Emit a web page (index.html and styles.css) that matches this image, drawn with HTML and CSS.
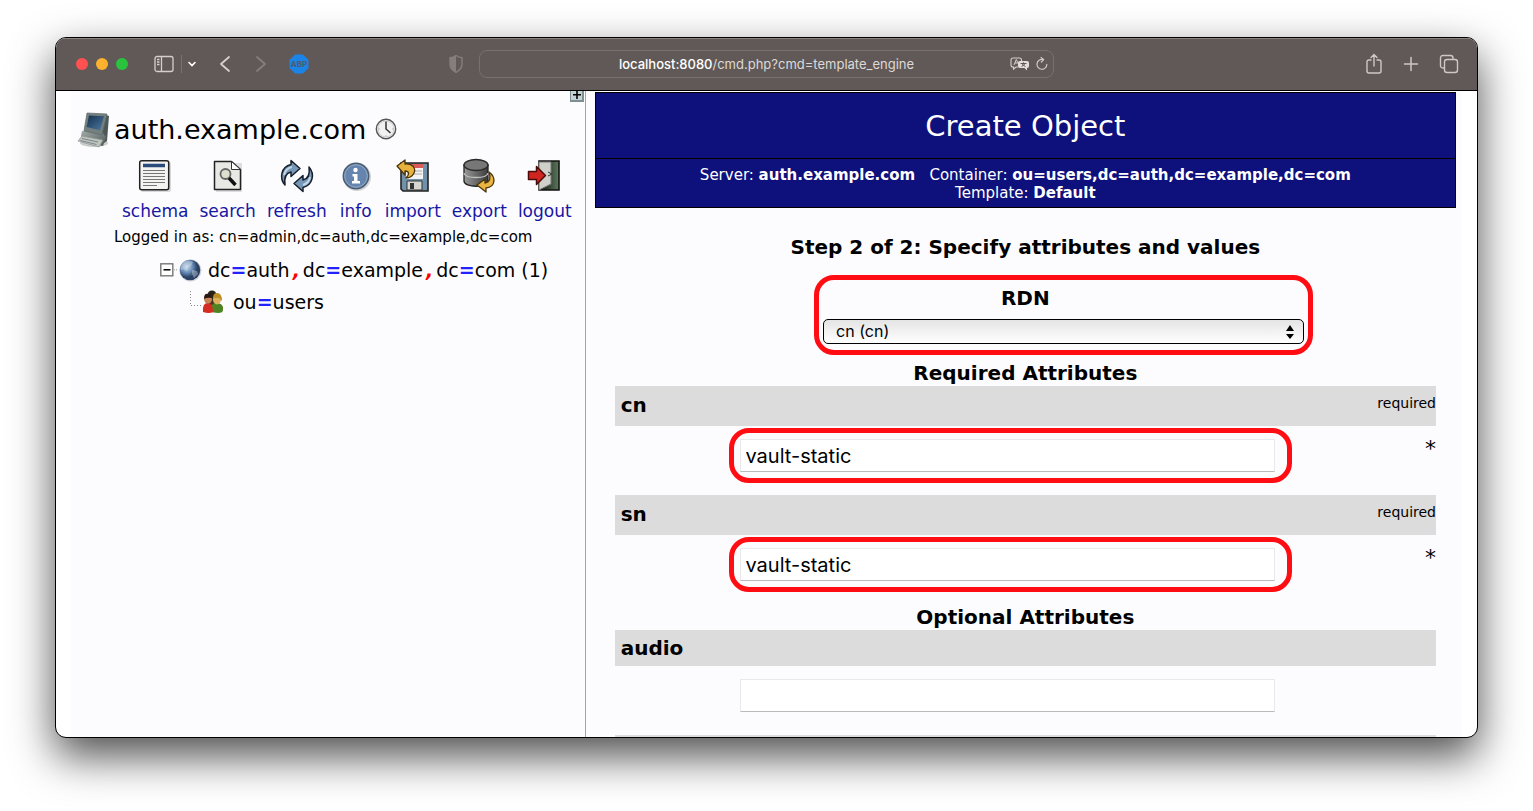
FILE: index.html
```html
<!DOCTYPE html>
<html lang="en">
<head>
<meta charset="utf-8">
<title>Create Object</title>
<link rel="stylesheet" href="styles.css">
</head>
<body>
<div class="window">
  <header class="toolbar">
    <div class="tools tools-left">
      <span class="lights"><i class="light red"></i><i class="light amber"></i><i class="light green"></i></span>
      <button class="tool sidebar-toggle" aria-label="Sidebar"><svg width="20" height="18" viewBox="0 0 20 18" fill="none" stroke="#d6cfcc" stroke-width="1.3"><rect x="1" y="1.500" width="18" height="15" rx="2"/><path d="M7.500 1.500v15M3 4.500h2.500M3 7h2.500M3 9.500h2.500"/></svg></button>
      <button class="tool chevron" aria-label="Tab groups"><svg width="10" height="8" viewBox="0 0 10 8" fill="none" stroke="#fff" stroke-width="1.6" stroke-linecap="round"><path d="M2 2.500l3 3 3-3"/></svg></button>
      <button class="tool back" aria-label="Back"><svg width="12" height="18" viewBox="0 0 12 18" fill="none" stroke="#d6cfcc" stroke-width="1.800" stroke-linecap="round" stroke-linejoin="round"><path d="M10 2L2 9l8 7"/></svg></button>
      <button class="tool forward" aria-label="Forward"><svg width="12" height="18" viewBox="0 0 12 18" fill="none" stroke="#857d7a" stroke-width="1.800" stroke-linecap="round" stroke-linejoin="round"><path d="M2 2l8 7-8 7"/></svg></button>
      <button class="tool adblock" aria-label="Adblock Plus"><svg width="20" height="20" viewBox="0 0 20 20"><path d="M6 .5h8L19.500 6v8L14 19.500H6L.5 14V6z" fill="#1c84e6"/><text x="10" y="13" text-anchor="middle" class="abp">ABP</text></svg></button>
      <button class="tool shield" aria-label="Privacy report"><svg width="16" height="20" viewBox="0 0 16 20"><path d="M8 1.500c2 1.500 4 2 6 2.200V10c0 4-2.500 6.500-6 8.300C4.500 16.500 2 14 2 10V3.700C4 3.500 6 3 8 1.500z" fill="none" stroke="#857e7c" stroke-width="1.400"/><path d="M8 1.500v16.800C4.500 16.500 2 14 2 10V3.700C4 3.500 6 3 8 1.500z" fill="#857e7c"/></svg></button>
    </div>
    <div class="address">
      <button class="url">localhost:8080<span>/cmd.php?cmd=template_engine</span></button>
      <div class="address-icons">
        <button class="tool" aria-label="Translate"><svg width="20" height="14" viewBox="0 0 20 14"><path d="M3 1h6.500q2 0 2 2v1.500M8 10H6l-2.500 2v-2H3Q1 10 1 8V3q0-2 2-2" fill="none" stroke="#d6cfcc" stroke-width="1.100"/><path d="M4 8l2.300-5.500L8.500 7M5 6h2.500" fill="none" stroke="#d6cfcc"/><path d="M10 4h7q2 0 2 2v3q0 2-2 2v2.500L14.500 11H10q-2 0-2-2V6q0-2 2-2z" fill="#e4dfdd"/><path d="M10.500 6.500h6M13.500 5.300v1.200M11.500 9.500q2.500-1 3.500-3M12 6.700q1 2 3.500 2.800" fill="none" stroke="#5f5856"/></svg></button>
        <button class="tool" aria-label="Reload"><svg width="12" height="13" viewBox="0 0 12 13" fill="none" stroke="#d0c9c6" stroke-width="1.200" stroke-linecap="round"><path d="M10.800 7.300A4.900 4.900 0 1 1 7 2.600M5 .6l2.600 2-2.200 2.400"/></svg></button>
      </div>
    </div>
    <div class="tools tools-right">
      <button class="tool" aria-label="Share"><svg width="18" height="22" viewBox="0 0 18 22" fill="none" stroke="#cfc8c5" stroke-width="1.400" stroke-linecap="round"><path d="M6 7H4Q2 7 2 9v9q0 2 2 2h10q2 0 2-2V9q0-2-2-2h-2M9 13V1.500M6 4.500l3-3 3 3"/></svg></button>
      <button class="tool" aria-label="New tab"><svg width="16" height="16" viewBox="0 0 16 16" stroke="#cfc8c5" stroke-width="1.500" stroke-linecap="round"><path d="M8 1.500v13M1.500 8h13"/></svg></button>
      <button class="tool" aria-label="Tab overview"><svg width="20" height="20" viewBox="0 0 20 20" fill="none" stroke="#cfc8c5" stroke-width="1.400"><rect x="5.500" y="5.500" width="13" height="13" rx="2.500"/><path d="M5.500 14H4q-2.500 0-2.500-2.500V4Q1.500 1.500 4 1.500h7.500Q14 1.500 14 4v1.500"/></svg></button>
    </div>
  </header>

  <div class="page">
    <aside class="sidebar">
      <button class="expand" aria-label="Expand"><svg width="14" height="11" viewBox="0 0 14 11"><path d="M0 0h14v11H0z" fill="#7d8f93"/><path d="M1 0h11v9H1z" fill="#c5d2d5"/><path d="M3 3.800h8M7 0v8" stroke="#000" stroke-width="1.600"/></svg></button>
      <h1 class="server">
        <svg width="34" height="38" viewBox="0 0 34 38"><defs><linearGradient id="scr" x1="0" y1="0" x2="1" y2="1"><stop stop-color="#14304c"/><stop offset="1" stop-color="#4d7aa2"/></linearGradient><linearGradient id="casing" x1="0" y1="0" x2="1" y2="1"><stop stop-color="#a3aba8"/><stop offset="1" stop-color="#4e5a58"/></linearGradient></defs><ellipse cx="17" cy="33" rx="14" ry="4" fill="#c9cccb"/><path d="M26 4l6 2-2 25-6 4z" fill="#4c5855"/><path d="M5 21l20 1 4 5-3 9-19-4-3-6z" fill="url(#casing)"/><path d="M10 3l20 1-5 21-18-4z" fill="#74807f" stroke="#5b6768" stroke-width=".7"/><path d="M12 5.500l15 .8-4 14L9.600 17z" fill="url(#scr)"/><path d="M5 26l21 4-4 7L1 31z" fill="#bfc4bd" stroke="#8b938e" stroke-width=".7"/><path d="M5 28.500l16 3.500M3.500 30.500l16 4" stroke="#7d858f" fill="none"/></svg>
        <span>auth.example.com</span>
        <svg class="clock" width="22" height="22" viewBox="0 0 22 22"><circle cx="11" cy="11" r="9.700" fill="#f1f1f1" stroke="#555" stroke-width="1.400"/><circle cx="11" cy="11" r="8" fill="none" stroke="#d2d2d2"/><path d="M11 3.500V11l4.500 4" fill="none" stroke="#333" stroke-width="1.500"/><path d="M3.500 11h1M17.500 11h1M11 17.500v1" stroke="#888"/></svg>
      </h1>
      <nav class="actions">
        <a href="#"><svg width="36" height="36" viewBox="0 0 36 36"><rect x="4" y="4" width="30" height="30" rx="2" fill="#d9d9dc"/><rect x="2.700" y="2.700" width="29" height="29" rx="2" fill="#f3f3f1" stroke="#222" stroke-width="1.500"/><path d="M6 7.500h22" stroke="#2b4a7c" stroke-width="3.500"/><path d="M6 12.500h22M6 15.500h22M6 18.500h22M6 21.500h22M6 24.500h22M6 27.500h14" stroke="#777" stroke-width="1.200"/></svg>schema</a>
        <a href="#"><svg width="36" height="36" viewBox="0 0 36 36"><path d="M6 5h26v29H6z" fill="#dedee0"/><path d="M4.500 3.500h17l9 8v20h-26z" fill="#e8e8e4" stroke="#222" stroke-width="1.500" stroke-linejoin="round"/><path d="M21.500 3.500v8h9z" fill="#fff" stroke="#333"/><circle cx="15.500" cy="16" r="5" fill="#dce0cf" stroke="#666" stroke-width="1.800"/><path d="M19 20l6.500 7" stroke="#111" stroke-width="3.500"/></svg>search</a>
        <a href="#"><svg width="36" height="36" viewBox="0 0 36 36" fill="#7697b5" stroke="#17202a" stroke-width="1.500" stroke-linejoin="round"><path d="M6 27C0 20 2 9 12 6.500V2.500l9 8-9 8v-4.500c-5 1-7 6-6 13z"/><path d="M30 9c6 7 4 18-6 20.500v4l-9-8 9-8V22c5-1 7-6 6-13z"/><path d="M5 17q2-7 8-8M31 19q-1 6-7 8" stroke="#c0d6e7" fill="none" stroke-width="2"/></svg>refresh</a>
        <a href="#"><svg width="36" height="36" viewBox="0 0 36 36"><circle cx="19" cy="19" r="14" fill="#d2d3d7"/><circle cx="18" cy="18" r="12.700" fill="#6585ae" stroke="#4c5b70" stroke-width="1.500"/><circle cx="18" cy="18" r="11.300" fill="none" stroke="#93aac5"/><circle cx="17.500" cy="12" r="2.200" fill="#fff"/><path d="M14.500 16h5v7h2.500v2.500h-8V23h2v-4.500h-1.500z" fill="#fff"/></svg>info</a>
        <a href="#"><svg width="36" height="36" viewBox="0 0 36 36"><path d="M6 5h27v28H8l-2-2z" fill="#7190aa" stroke="#222" stroke-width="1.600"/><path d="M11 6h17v15H11z" fill="#f4f4f4"/><path d="M11 6h17v4H11z" fill="#d95a57"/><path d="M13 13h14M13 16h14" stroke="#aaa"/><path d="M12 23h15v9H12z" fill="#d7d7d2" stroke="#333"/><path d="M15 25h4v6h-4z" fill="#333"/><path d="M2 8l8-6v4c8-1 11 5 9 9s-5 5-8 5c4-4 3-7-1-7v4z" fill="#e7b33e" stroke="#4c350b" stroke-width="1.300" stroke-linejoin="round"/></svg>import</a>
        <a href="#"><svg width="36" height="36" viewBox="0 0 36 36"><defs><linearGradient id="db"><stop stop-color="#999"/><stop offset="1" stop-color="#3c3c3c"/></linearGradient></defs><path d="M3 7v16c0 7 24 7 24 0V7z" fill="url(#db)" stroke="#222" stroke-width="1.300"/><ellipse cx="15" cy="7" rx="12" ry="5.500" fill="#777" stroke="#292929" stroke-width="1.300"/><path d="M3 15c1 6 23 6 24 0" fill="none" stroke="#c0c0c0" stroke-width="1.400"/><path d="M28 14c7 5 7 15-3 16v4l-9-7 8-6v4c5-1 6-5 4-11z" fill="#e9b440" stroke="#4c350b" stroke-width="1.300" stroke-linejoin="round"/></svg>export</a>
        <a href="#"><svg width="36" height="36" viewBox="0 0 36 36"><defs><linearGradient id="hall"><stop stop-color="#0b100c"/><stop offset="1" stop-color="#5d7a5d"/></linearGradient></defs><path d="M12 3h20v29H12z" fill="url(#hall)" stroke="#111" stroke-width="1.600"/><path d="M12 32V4h12v22z" fill="#d0d0cb" stroke="#777"/><path d="M21 14l4 2-4 2" fill="none" stroke="#333"/><path d="M1.500 13.500h8v-5l9 9-9 9v-5h-8z" fill="#cf2520" stroke="#4b0b09" stroke-width="1.500" stroke-linejoin="round"/></svg>logout</a>
      </nav>
      <p class="login">Logged in as: cn=admin,dc=auth,dc=example,dc=com</p>
      <ul class="tree">
        <li class="node">
          <svg width="18" height="14" viewBox="0 0 18 14"><rect x=".8" y=".8" width="12" height="12" fill="#fff" stroke="#777" stroke-width="1.400"/><path d="M3.500 6.800h7" stroke="#000" stroke-width="1.500"/><path d="M14 6.800h4" stroke="#999" stroke-dasharray="1 1"/></svg>
          <svg width="24" height="24" viewBox="0 0 24 24"><defs><radialGradient id="sea" cx=".35" cy=".35"><stop stop-color="#c9dbee"/><stop offset=".6" stop-color="#6488b4"/><stop offset="1" stop-color="#2b4264"/></radialGradient></defs><circle cx="12.500" cy="12.500" r="11" fill="#d4d8de"/><circle cx="12" cy="12" r="10.300" fill="url(#sea)"/><path d="M6 4q5-3 9 0l-2 4-3 1-1 4-4-2-2 2q-1-5 3-9zM14 12l5 1 1 3-4 4-2-4z" fill="#dce5e9" opacity=".4"/></svg>
          <a href="#">dc<b>=</b>auth<em>,</em>dc<b>=</b>example<em>,</em>dc<b>=</b>com (1)</a>
        </li>
        <li class="node child">
          <svg width="12" height="30" viewBox="0 0 12 30"><path d="M.5 4v14M1 18.500h11" fill="none" stroke="#888" stroke-dasharray="1 2"/></svg>
          <svg class="people" width="22" height="24" viewBox="0 0 22 24"><circle cx="10" cy="5" r="4.500" fill="#282117"/><path d="M5 9h11v6H5z" fill="#48351f"/><path d="M8 22q0-9 6-9 8 0 7 7 0 3-5 3z" fill="#4f8220"/><path d="M1 22q-1-9 5-9 5 0 5 9-4 2-10 0z" fill="#d42c23"/><ellipse cx="6" cy="9" rx="4" ry="4.500" fill="#c58358"/><path d="M2 9q0-6 4-5 4 0 4 4-5-1-8 1z" fill="#291710"/><ellipse cx="15" cy="9.500" rx="4" ry="5" fill="#ddb05e"/><path d="M11 8q0-5 4-5 5 0 5 8l-3-3z" fill="#bd8e25"/></svg>
          <a href="#">ou<b>=</b>users</a>
        </li>
      </ul>
    </aside>

    <main class="main">
      <div class="banner">
        <h2>Create Object</h2>
        <p>Server: <b>auth.example.com</b> &nbsp; Container: <b>ou=users,dc=auth,dc=example,dc=com</b><br>Template: <b>Default</b></p>
      </div>
      <form class="form">
        <h3 class="step">Step 2 of 2: Specify attributes and values</h3>
        <div class="rdn">
          <h3><label for="rdn">RDN</label></h3>
          <div class="select-row">
            <span class="select-box ring">
              <select id="rdn"><option>cn (cn)</option></select>
              <svg class="arrows" width="10" height="16" viewBox="0 0 10 16"><path d="M5 1l4 6H1zM5 15l4-5H1z"/></svg>
            </span>
          </div>
        </div>
        <h3>Required Attributes</h3>
        <div class="bar"><label for="cn">cn</label><small>required</small></div>
        <div class="field"><span class="input-box ring"><input id="cn" type="text" value="vault-static"></span><span class="star">*</span></div>
        <div class="bar"><label for="sn">sn</label><small>required</small></div>
        <div class="field"><span class="input-box ring"><input id="sn" type="text" value="vault-static"></span><span class="star">*</span></div>
        <h3>Optional Attributes</h3>
        <div class="bar short"><label for="audio">audio</label></div>
        <div class="field"><span class="input-box"><input id="audio" type="text"></span></div>
        <div class="bar"></div>
      </form>
    </main>
  </div>
</div>
</body>
</html>
```
FILE: styles.css
```css
* { box-sizing: border-box; }

body {
  margin: 0;
  height: 100vh;
  padding: 37px 55px 73px;
  background: #fff;
  font-family: Verdana, "DejaVu Sans", sans-serif;
  color: #000;
  overflow: hidden;
}

h1, h2, h3, p, ul { margin: 0; padding: 0; }
button { padding: 0; border: 0; background: none; color: inherit; font: inherit; }
svg { display: block; flex: none; }
a { color: inherit; text-decoration: none; }

.window {
  display: flex;
  flex-direction: column;
  height: 100%;
  border: 1px solid #000;
  border-radius: 11px;
  background: #fff;
  box-shadow: 0 18px 44px rgba(0, 0, 0, .7);
  overflow: hidden;
}

/* Browser toolbar */
.toolbar {
  display: grid;
  grid-template-columns: 1fr minmax(0, 575px) 1fr;
  align-items: center;
  flex: none;
  height: 53px;
  padding-bottom: 2px;
  border-top: 1px solid #8b8482;
  border-bottom: 1px solid #000;
  background: #605957;
  font-family: Inter, sans-serif;
}
.tools { display: flex; align-items: center; }
.tools-left { padding: 0 15px 0 20px; }
.tools-right { justify-content: flex-end; gap: 28px; padding-right: 18px; }
.tools-right .tool:nth-child(2) { margin-right: -8px; margin-left: -8px; }
.lights { display: flex; gap: 8px; }
.light { width: 12px; height: 12px; border-radius: 50%; }
.red { background: #ff5150; }
.amber { background: #fdb12f; }
.green { background: #29c33d; }
.sidebar-toggle { margin-left: 26px; }
.chevron { display: flex; align-items: center; height: 18px; margin-left: 7px; padding-left: 5px; border-left: 1px solid #777170; }
.back { margin-left: 22px; }
.forward { margin-left: 24px; }
.adblock { margin-left: 22px; }
.abp { font: 700 8px Inter, sans-serif; fill: #4e5b6e; }
.shield { margin-left: auto; }
.address {
  display: grid;
  grid-template-columns: 1fr auto 1fr;
  align-items: center;
  height: 28px;
  border: 1px solid #777170;
  border-radius: 8px;
}
.url { grid-column: 2; font-size: 13px; font-weight: 500; color: #fff; }
.url span { font-weight: 400; color: #ded9d7; }
.address-icons { display: flex; align-items: center; justify-content: flex-end; gap: 6px; padding-right: 5px; }

/* Page frames */
.page { display: flex; flex: 1; min-height: 0; margin: 0 15px; background: #fcfcfe; }
.sidebar { position: relative; flex: 0 0 37%; border-right: 1px solid #a2a2b0; }
.main { flex: 1; min-width: 0; padding: 1px 6px 0 9px; overflow: hidden; }

.expand { position: absolute; top: 0; right: 1px; }
.server { display: flex; align-items: center; height: 64px; padding: 12px 0 0 6px; font-size: 27px; font-weight: 400; }
.server span { margin-left: 3px; }
.clock { margin-left: 9px; }
.actions { display: flex; gap: 11px; margin: 3px 0 0 51px; font-size: 17px; line-height: 20px; color: #1717a4; }
.actions a { display: flex; flex-direction: column; align-items: center; gap: 7px; }
.login { margin: 6px 0 0 43px; font-size: 15px; line-height: 20px; white-space: nowrap; }
.tree { list-style: none; margin: 7px 0 0 89px; font-size: 19px; white-space: nowrap; }
.node { display: flex; align-items: center; height: 32px; }
.node a { margin-left: 6px; }
.node b { color: #22f; }
.node em { padding: 0 3px; color: #f00; font-weight: 700; }
.child { padding-left: 30px; }
.child .people + a { margin-left: 9px; }

.banner { border: 1px solid #000; background: #0e107c; color: #fff; text-align: center; }
.banner h2 { padding: 16px 0 15px; border-bottom: 1px solid #000; font-size: 29px; font-weight: 400; line-height: 34px; }
.banner p { padding: 7px 0 5px; font-size: 15px; line-height: 18px; }

/* Form */
.form { padding: 26px 20px 0; }
h3 { font-size: 20px; line-height: 26px; text-align: center; }
.step { margin-bottom: 25px; }
.select-row { display: flex; justify-content: center; padding: 8px 3px 16px 79px; }
.select-box, .input-box { position: relative; width: 65%; }
.ring::after { content: ""; position: absolute; border: 5px solid #ff0d13; border-radius: 20px; pointer-events: none; }
.select-box.ring::after { inset: -44px -9px -11px; }
.input-box.ring::after { inset: -11px -17px -11px -11px; }
.select-box { height: 25px; }
select {
  display: block;
  width: 100%;
  height: 25px;
  padding: 0 12px 2px;
  appearance: none;
  border: 1px solid #000;
  border-radius: 5px;
  background: linear-gradient(#e4e4e4, #fff);
  color: #000;
  font: 16px Inter, sans-serif;
}
.arrows { position: absolute; top: 5px; right: 9px; pointer-events: none; }
.bar { display: flex; justify-content: space-between; min-height: 40px; padding-left: 6px; background: #dcdcdc; }
.bar label { font-size: 20px; font-weight: 700; line-height: 38px; }
.bar small { font-size: 14px; line-height: 34px; }
.bar.short { min-height: 36px; }
.bar.short label { line-height: 36px; }
.field { display: grid; grid-template-columns: 1fr 35px; justify-items: center; padding: 13px 0 23px; }
.field .input-box { width: 68%; }
input {
  display: block;
  width: 100%;
  height: 33px;
  padding: 0 4px;
  border: 1px solid #e9e9eb;
  border-bottom-color: #bababa;
  background: #fff;
  color: #000;
  font: 20px Inter, sans-serif;
}
.star { justify-self: end; font-size: 22px; line-height: 20px; }
```
